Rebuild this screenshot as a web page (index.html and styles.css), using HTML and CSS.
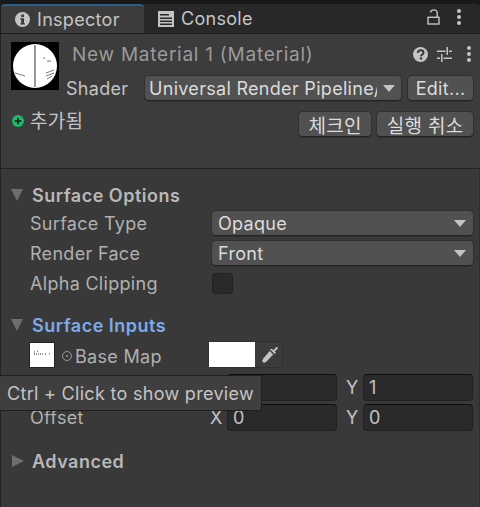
FILE: index.html
```html
<!DOCTYPE html>
<html lang="en">
<head>
    <meta charset="UTF-8">
    <meta name="viewport" content="width=device-width, initial-scale=1.0">
    <title>Inspector</title>
    <link rel="stylesheet" href="styles.css">
</head>
<body>
    <div class="window">
        <div class="tabbar">
            <div class="tab active">
                <svg class="tab-icon" width="15" height="15" viewBox="0 0 15 15">
                    <circle cx="7.5" cy="7.5" r="7.5" fill="#c4c4c4"/>
                    <rect x="6.200" y="2.500" width="2.800" height="2.600" fill="#3c3c3c"/>
                    <path d="M5.200 6.200h3.800v5h1v1.400H5.200v-1.400h1v-3.600h-1z" fill="#3c3c3c"/>
                </svg>
                <span>Inspector</span>
            </div>
            <div class="tab">
                <svg class="tab-icon" width="16" height="16" viewBox="0 0 16 16">
                    <path d="M0 0h16v16H0z" fill="#c4c4c4"/>
                    <path d="M2 3h9v1.500H2zM2 6.500h12V8H2zM2 9.500h12V11H2zM2 12.500h12V14H2z" fill="#282828"/>
                </svg>
                <span>Console</span>
            </div>
            <div class="tab-tools">
                <svg width="13" height="16" viewBox="0 0 13 16" fill="none" stroke="#c4c4c4" stroke-width="1.400">
                    <rect x="1" y="8.300" width="11" height="6.700"/>
                    <path d="M3.500 3.400C3.800 1.600 5 .9 6.800 .9c2 0 3.400 1 3.400 3v4.400"/>
                </svg>
                <div class="dots"><i></i><i></i><i></i></div>
            </div>
        </div>

        <div class="header">
            <div class="header-top">
                <div class="preview">
                    <svg width="48" height="48" viewBox="0 0 48 48">
                        <rect width="48" height="48" fill="#000"/>
                        <circle cx="24" cy="24" r="22" fill="#fff"/>
                        <rect x="23" y="3" width="2" height="42" fill="#999"/>
                        <path d="M32 16h2M36 19h4M35 31l8-3M35 34l8-3M36 37l5-3M4 31l10 3" stroke="#777" stroke-width="1"/>
                    </svg>
                </div>
                <div class="header-main">
                    <div class="title-row">
                        <span class="title">New Material 1 (Material)</span>
                        <div class="title-tools">
                            <svg width="15" height="15" viewBox="0 0 15 15">
                                <circle cx="7.500" cy="7.500" r="7.500" fill="#c4c4c4"/>
                                <path d="M4.700 6c0-1.700 1.200-2.700 2.900-2.700s2.900 1 2.900 2.400C10.500 7.600 8 7.500 8 9.300" fill="none" stroke="#383838" stroke-width="2"/>
                                <rect x="6.900" y="10.300" width="2.200" height="2.200" fill="#383838"/>
                            </svg>
                            <svg class="sliders" width="15" height="15" viewBox="0 0 15 15" fill="#c4c4c4">
                                <path d="M0 3.500h8.500v1.400H0zM12 3.500h3v1.400h-3zM9.500 0H11v8H9.500zM0 10.500h3v1.400H0zM6.500 10.500H15v1.400H6.500zM4 7h1.500v8H4z"/>
                            </svg>
                            <div class="dots"><i></i><i></i><i></i></div>
                        </div>
                    </div>
                    <div class="shader-row">
                        <span class="shader-label">Shader</span>
                        <div class="btn shader-select">
                            <span class="clip">Universal Render Pipeline/Lit</span>
                            <i class="arrow"></i>
                        </div>
                        <div class="btn edit-btn">Edit...</div>
                    </div>
                </div>
            </div>
            <div class="vcs-row">
                <div class="vcs-status">
                    <svg width="12" height="12" viewBox="0 0 12 12">
                        <circle cx="6" cy="6" r="6" fill="#1fb866"/>
                        <path d="M2.800 6h6.400M6 2.800v6.400" stroke="#0d3a20" stroke-width="2"/>
                    </svg>
                    <span>추가됨</span>
                </div>
                <div class="vcs-buttons">
                    <div class="btn vcs-btn">체크인</div>
                    <div class="btn vcs-btn">실행 취소</div>
                </div>
            </div>
        </div>

        <div class="body">
            <div class="section-head">
                <i class="fold down"></i>
                <span>Surface Options</span>
            </div>
            <div class="row first">
                <span class="label">Surface Type</span>
                <div class="btn select"><span>Opaque</span><i class="arrow"></i></div>
            </div>
            <div class="row">
                <span class="label">Render Face</span>
                <div class="btn select"><span>Front</span><i class="arrow"></i></div>
            </div>
            <div class="row">
                <span class="label">Alpha Clipping</span>
                <div class="checkbox"></div>
            </div>

            <div class="section-head inputs">
                <i class="fold down"></i>
                <span>Surface Inputs</span>
            </div>
            <div class="map-row">
                <div class="thumb">
                    <svg width="24" height="24" viewBox="0 0 24 24">
                        <path d="M4 9h2M4 11h9M15 11h2M19 11h1M7 8h2" stroke="#333" stroke-width="1" stroke-dasharray="1 1"/>
                    </svg>
                </div>
                <svg class="picker-dot" width="10" height="10" viewBox="0 0 10 10" fill="none" stroke="#9a9a9a">
                    <circle cx="5" cy="5" r="4.500"/>
                    <circle cx="5" cy="5" r="1" fill="#9a9a9a" stroke="none"/>
                </svg>
                <span class="map-label">Base Map</span>
                <div class="color-field">
                    <div class="swatch"></div>
                    <svg width="18" height="18" viewBox="0 0 18 18" fill="#c4c4c4">
                        <path d="M11 3l1.500 1.300L15 1.200c.9-.8 2.400.6 1.600 1.600l-2.800 2.600L15 6.700l-1.300 1.200-5-5z"/>
                        <path d="M8.700 5l3.600 3.600L5.500 15.400 3 17l-2-2 1.500-2.800z"/>
                    </svg>
                </div>
            </div>
            <!-- the tooltip sits over the left part of this row -->
            <div class="row vec-row first-vec">
                <span class="label"></span>
                <div class="vec">
                    <span class="axis"></span><div class="num"></div>
                    <span class="axis">Y</span><div class="num">1</div>
                </div>
            </div>
            <div class="row vec-row">
                <span class="label">Offset</span>
                <div class="vec">
                    <span class="axis">X</span><div class="num">0</div>
                    <span class="axis">Y</span><div class="num">0</div>
                </div>
            </div>
            <div class="section-head advanced">
                <i class="fold right"></i>
                <span>Advanced</span>
            </div>
        </div>

        <div class="tooltip">Ctrl + Click to show preview</div>
    </div>
</body>
</html>
```

FILE: styles.css
```css
/* Unity dark editor theme */
html, body {
    margin: 0;
    height: 100%;
}

body {
    background: #191919;
    color: #c4c4c4;
    font-family: 'Inter', 'Noto Sans CJK KR', sans-serif;
    font-size: 18px;
    letter-spacing: 0.3px;
    overflow: hidden;
}

.window {
    position: relative;
    height: 507px;
    padding-top: 4px;
    box-sizing: border-box;
    display: flex;
    flex-direction: column;
}

/* Tabs */
.tabbar {
    height: 30px;
    box-sizing: border-box;
    flex: none;
    display: flex;
    background: #282828;
    border-bottom: 1px solid #1c1c1c;
    border-left: 1px solid #1c1c1c;
    border-radius: 4px 4px 0 0;
}

.tab {
    display: flex;
    align-items: center;
    gap: 7px;
    padding-left: 14px;
    width: 143px;
    box-sizing: border-box;
}

.tab.active {
    background: #3c3c3c;
    border-top: 2px solid #2c5d87;
    border-radius: 4px 4px 0 0;
}

.tab-icon {
    flex: none;
}

.tab-tools {
    margin-left: auto;
    display: flex;
    align-items: center;
    gap: 17px;
    padding-right: 19px;
    padding-bottom: 4px;
}

.dots {
    display: flex;
    flex-direction: column;
    gap: 2px;
}

.dots i {
    width: 4px;
    height: 4px;
    border-radius: 50%;
    background: #c4c4c4;
}

/* Material header */
.header {
    height: 135px;
    flex: none;
    box-sizing: border-box;
    padding: 8px 7px 0 10px;
    background: #3c3c3c;
    border-left: 1px solid #232323;
    border-bottom: 1px solid #232323;
}

.header-top {
    display: flex;
}

.preview {
    width: 48px;
    height: 48px;
    flex: none;
    line-height: 0;
}

.header-main {
    flex: 1;
    min-width: 0;
    padding-left: 7px;
}

.title-row {
    height: 24px;
    display: flex;
    align-items: center;
    padding-left: 6px;
}

.title {
    color: #9a9a9a;
    font-size: 19px;
    letter-spacing: 0.75px;
    white-space: nowrap;
}

.title-tools {
    margin-left: auto;
    display: flex;
    align-items: center;
    padding-right: 2px;
}

.sliders {
    margin: 0 15px 0 9px;
}

.shader-row {
    display: flex;
    align-items: center;
    margin-top: 10px;
}

.shader-label {
    width: 79px;
    flex: none;
}

.btn {
    height: 25px;
    box-sizing: border-box;
    background: #515151;
    border-radius: 4px;
    border-bottom: 1px solid #242424;
    box-shadow: 0 0 0 1px #303030;
    color: #dcdcdc;
    display: flex;
    align-items: center;
}

.shader-select {
    width: 256px;
    flex: none;
    padding: 0 6px 0 4px;
    justify-content: space-between;
}

.clip {
    overflow: hidden;
    white-space: nowrap;
    width: 228px;
}

.edit-btn {
    flex: 1;
    margin-left: 7px;
    justify-content: center;
}

.arrow {
    flex: none;
    width: 0;
    height: 0;
    border-left: 6px solid transparent;
    border-right: 6px solid transparent;
    border-top: 7px solid #c4c4c4;
}

.vcs-row {
    display: flex;
    justify-content: space-between;
    margin-top: 11px;
    margin-left: 1px;
}

.vcs-status {
    display: flex;
    align-items: center;
    gap: 6px;
    height: 24px;
    margin-top: -5px;
    font-size: 19px;
}

.vcs-status svg {
    margin-top: 4px;
}

.vcs-buttons {
    display: flex;
    gap: 6px;
}

.vcs-btn {
    padding: 0 9.5px;
    font-size: 19px;
}

/* Inspector body */
.body {
    flex: 1;
    background: #393939;
    border-left: 1px solid #232323;
    border-right: 1px solid #2e2e2e;
    padding: 14px 6px 0 11px;
    overflow: hidden;
}

.section-head {
    height: 24px;
    margin-left: -1px;
    display: flex;
    align-items: center;
    gap: 9px;
    font-weight: 600;
    letter-spacing: 0.5px;
    color: #b8b8b8;
}

.section-head.inputs {
    margin-top: 17px;
    color: #7caaea;
}

.section-head.advanced {
    margin-top: 18px;
    gap: 8px;
}

.fold {
    width: 0;
    height: 0;
    flex: none;
}

.fold.down {
    border-left: 6.500px solid transparent;
    border-right: 6.500px solid transparent;
    border-top: 12px solid #6e6e6e;
}

.fold.right {
    margin-left: 1px;
    border-top: 6.500px solid transparent;
    border-bottom: 6.500px solid transparent;
    border-left: 12px solid #6e6e6e;
}

.row {
    height: 25px;
    margin-top: 5px;
    display: flex;
    align-items: center;
    padding-left: 18px;
}

.row.first {
    margin-top: 4px;
}

.label {
    width: 182px;
    flex: none;
    color: #b0b0b0;
}

.select {
    flex: 1;
    padding: 0 7px 0 6px;
    justify-content: space-between;
}

.checkbox {
    width: 21px;
    height: 21px;
    box-sizing: border-box;
    background: #2a2a2a;
    border: 1px solid #232323;
    border-radius: 3px;
}

.map-row {
    display: flex;
    align-items: center;
    margin-top: 4px;
    padding-left: 17px;
    height: 27px;
}

.thumb {
    width: 24px;
    height: 24px;
    background: #fff;
    line-height: 0;
    border: 1px solid #232323;
    flex: none;
}

.picker-dot {
    margin: 3px 0 0 7px;
    flex: none;
}

.map-label {
    margin-left: 3px;
    padding-top: 4px;
    width: 133px;
    flex: none;
    color: #b0b0b0;
}

.color-field {
    width: 75px;
    height: 27px;
    display: flex;
    align-items: center;
    background: #3c3c3c;
    border: 1px solid #303030;
    border-radius: 5px;
    box-sizing: border-box;
}

.swatch {
    width: 46px;
    height: 100%;
    background: #fff;
    flex: none;
    margin-right: 6px;
}

.vec-row {
    margin-top: 3px;
    height: 27px;
}

.vec-row.first-vec {
    margin-top: 6px;
}

.vec {
    flex: 1;
    display: flex;
    align-items: center;
    margin-left: -2px;
}

.axis {
    width: 17px;
    flex: none;
}

.axis + .num + .axis {
    margin-left: 9px;
}

.num {
    flex: 1;
    height: 27px;
    box-sizing: border-box;
    padding-left: 5px;
    background: #2a2a2a;
    border: 1px solid #212121;
    border-top-color: #0d0d0d;
    border-radius: 4px;
    display: flex;
    align-items: center;
}

/* Tooltip over the tiling row */
.tooltip {
    position: absolute;
    left: 0;
    top: 375px;
    width: 262px;
    height: 36px;
    box-sizing: border-box;
    padding: 1px 0 0 7px;
    display: flex;
    align-items: center;
    background: #3f3f3f;
    border: 1px solid #1f1f1f;
    border-left: none;
    white-space: nowrap;
}
```
